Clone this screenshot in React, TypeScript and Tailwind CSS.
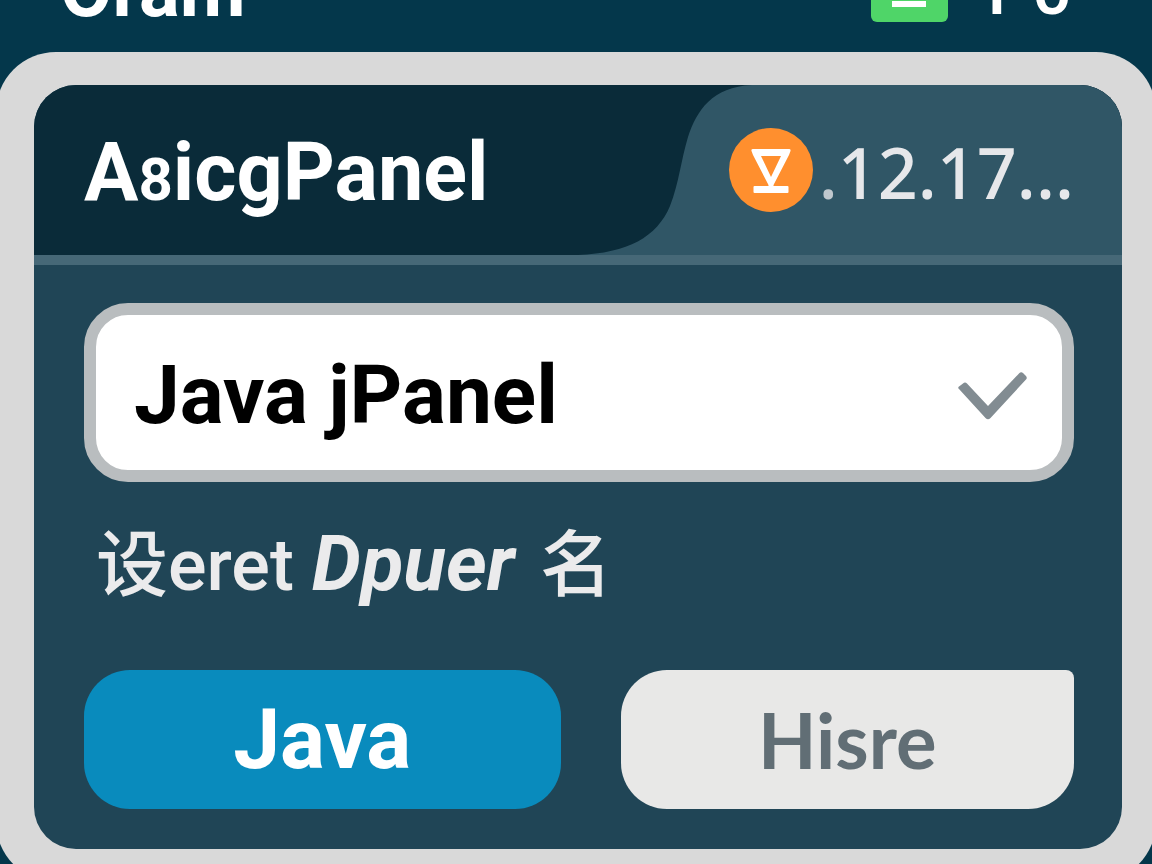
import React from 'react'

const CheckIcon = () => (
    <svg className="w-[72px] h-14 shrink-0" viewBox="0 0 72 56" fill="none" aria-hidden="true">
        <path
            d="M3 22 L29.5 51 Q32 53.5 34.5 51 L70 12.5 Q71.5 11 70 9 L67 6 Q65 4.5 63 6.5 L32 39 L11 16.5 Q9 14.5 7 16.5 L3 19.5 Q1.5 20.5 3 22 Z"
            fill="#828c92"
        />
    </svg>
)

const VersionIcon = () => (
    <svg className="w-[84px] h-[84px] shrink-0" viewBox="0 0 84 84" fill="none" aria-hidden="true">
        <circle cx="42" cy="42" r="42" fill="#ff8f2e" />
        <path
            fillRule="evenodd"
            d="M24 21 H60 Q62 21 61.5 23 L60 27 L44.5 57 V59 H39.5 V57 L24 27 L22.5 23 Q22 21 24 21 Z M32 28 L42 49 L52 28 Z"
            fill="#ffffff"
        />
        <rect x="24.5" y="58" width="35" height="7" rx="1" fill="#ffffff" />
    </svg>
)

const TopBar = () => (
    <div className="h-[52px] pl-[60px] pr-20 pb-[26px] flex items-end justify-between overflow-hidden text-white leading-[72px]">
        <span className="text-[76px] font-bold">Oram</span>
        <div className="flex items-end gap-10">
            {/* Status badge */}
            <div className="w-[77px] h-16 mb-1 rounded-md bg-[#4fd568] flex items-end justify-center pb-[15px]">
                <div className="w-[34px] h-1.5 bg-white" />
            </div>
            <span className="text-[70px] font-medium">P0</span>
        </div>
    </div>
)

const PanelHeader = () => (
    <header className="flex h-[170px] bg-[#0a2b39]">
        <h1 className="flex-1 pl-[50px] pt-3 flex items-center text-white text-[81px] leading-[96px] font-bold whitespace-nowrap">
            <span>
                A<span className="text-[60px]">8</span>icgPanel
            </span>
        </h1>
        <div className="relative w-1/2 pr-12 flex items-center justify-end gap-1.5 bg-[#305666]">
            {/* Curved edge of the title tab */}
            <svg className="absolute left-0 top-0 w-[174px] h-full" viewBox="0 0 174 170" preserveAspectRatio="none" aria-hidden="true">
                <path d="M0 0 H174 C134 2 119 25 110 52 C103 75 101 98 92 121 C79 152 50 168 0 170 Z" fill="#0a2b39" />
            </svg>
            <VersionIcon />
            <span className="pt-1 text-[#e6e7ea] text-[70px] leading-[96px] font-medium font-['Noto_Sans',sans-serif]">
                <span className="text-[#c0c8ce]">.</span>12.17...
            </span>
        </div>
    </header>
)

export default function App() {
    return (
        <div className="h-screen overflow-hidden bg-[#04374b] font-['Roboto','Noto_Sans_CJK_SC',sans-serif]">
            <TopBar />
            <main className="-mx-1 pl-[38px] pr-[34px] pt-[33px] pb-[33px] rounded-[60px] bg-[#d9d9d9]">
                <section className="rounded-[42px] overflow-hidden bg-[#204556]">
                    <PanelHeader />
                    <form className="border-t-10 border-[#466877] pt-[38px] pb-10 pl-[50px] pr-12" onSubmit={(e) => e.preventDefault()}>
                        <div className="h-[179px] flex items-center pt-1 pl-[38px] pr-[34px] bg-white border-[12px] border-[#b9bdbf] rounded-[44px]">
                            <input
                                id="panel-name"
                                type="text"
                                defaultValue="Java jPanel"
                                className="flex-1 min-w-0 bg-transparent outline-none text-black text-[82px] leading-[96px] font-bold"
                            />
                            <CheckIcon />
                        </div>
                        <label
                            htmlFor="panel-name"
                            className="block mt-[34px] mb-14 pl-3 text-[#ebebec] text-[72px] leading-[96px] font-medium whitespace-nowrap"
                        >
                            设eret <em className="mr-2 text-[78px] font-bold">Dpuer</em> 名
                        </label>
                        <div className="grid grid-cols-[476fr_453fr] gap-15">
                            <button type="button" className="h-[139px] rounded-[46px] bg-[#098bbd] text-white text-[84px] leading-[96px] font-bold">
                                Java
                            </button>
                            <button
                                type="button"
                                className="h-[139px] rounded-[46px] rounded-tr-lg bg-[#e8e8e7] text-[#616e75] text-[76px] leading-[96px] font-bold font-['Lato',sans-serif]"
                            >
                                Hisre
                            </button>
                        </div>
                    </form>
                </section>
            </main>
        </div>
    )
}
